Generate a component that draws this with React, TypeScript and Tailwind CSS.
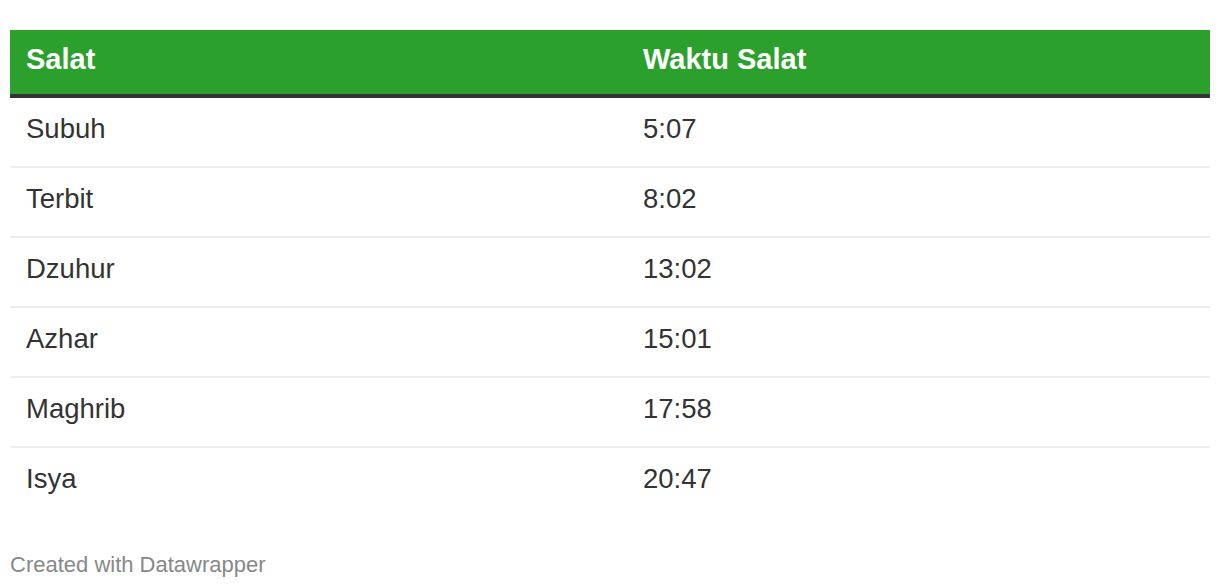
import React from "react";

const rows: [string, string][] = [
  ["Subuh", "5:07"],
  ["Terbit", "8:02"],
  ["Dzuhur", "13:02"],
  ["Azhar", "15:01"],
  ["Maghrib", "17:58"],
  ["Isya", "20:47"],
];

export default function App() {
  return (
    <div
      className="w-[1220px] h-[588px] bg-white overflow-hidden px-[10px] pt-[30px]"
      style={{ fontFamily: '"Liberation Sans", Arial, sans-serif' }}
    >
      <div className="grid grid-cols-[617px_1fr] bg-[#2ca02c] h-[68px] border-b-4 border-[#333333] text-white font-bold text-[29px] leading-[29px]">
        <div className="pl-[16px] pt-[15px]">Salat</div>
        <div className="pl-[16px] pt-[15px]">Waktu Salat</div>
      </div>
      {rows.map(([name, time], i) => (
        <div
          key={name}
          className={
            "grid grid-cols-[617px_1fr] h-[70px] text-[27.5px] leading-[27.5px] text-[#333333] " +
            (i < rows.length - 1 ? "border-b-2 border-[#eeeeee]" : "")
          }
        >
          <div className="pl-[16px] pt-[17px]">{name}</div>
          <div className="pl-[16px] pt-[17px]">{time}</div>
        </div>
      ))}
      <div className="mt-[36px] text-[22px] leading-[22px] text-[#888888]">
        Created with Datawrapper
      </div>
    </div>
  );
}
